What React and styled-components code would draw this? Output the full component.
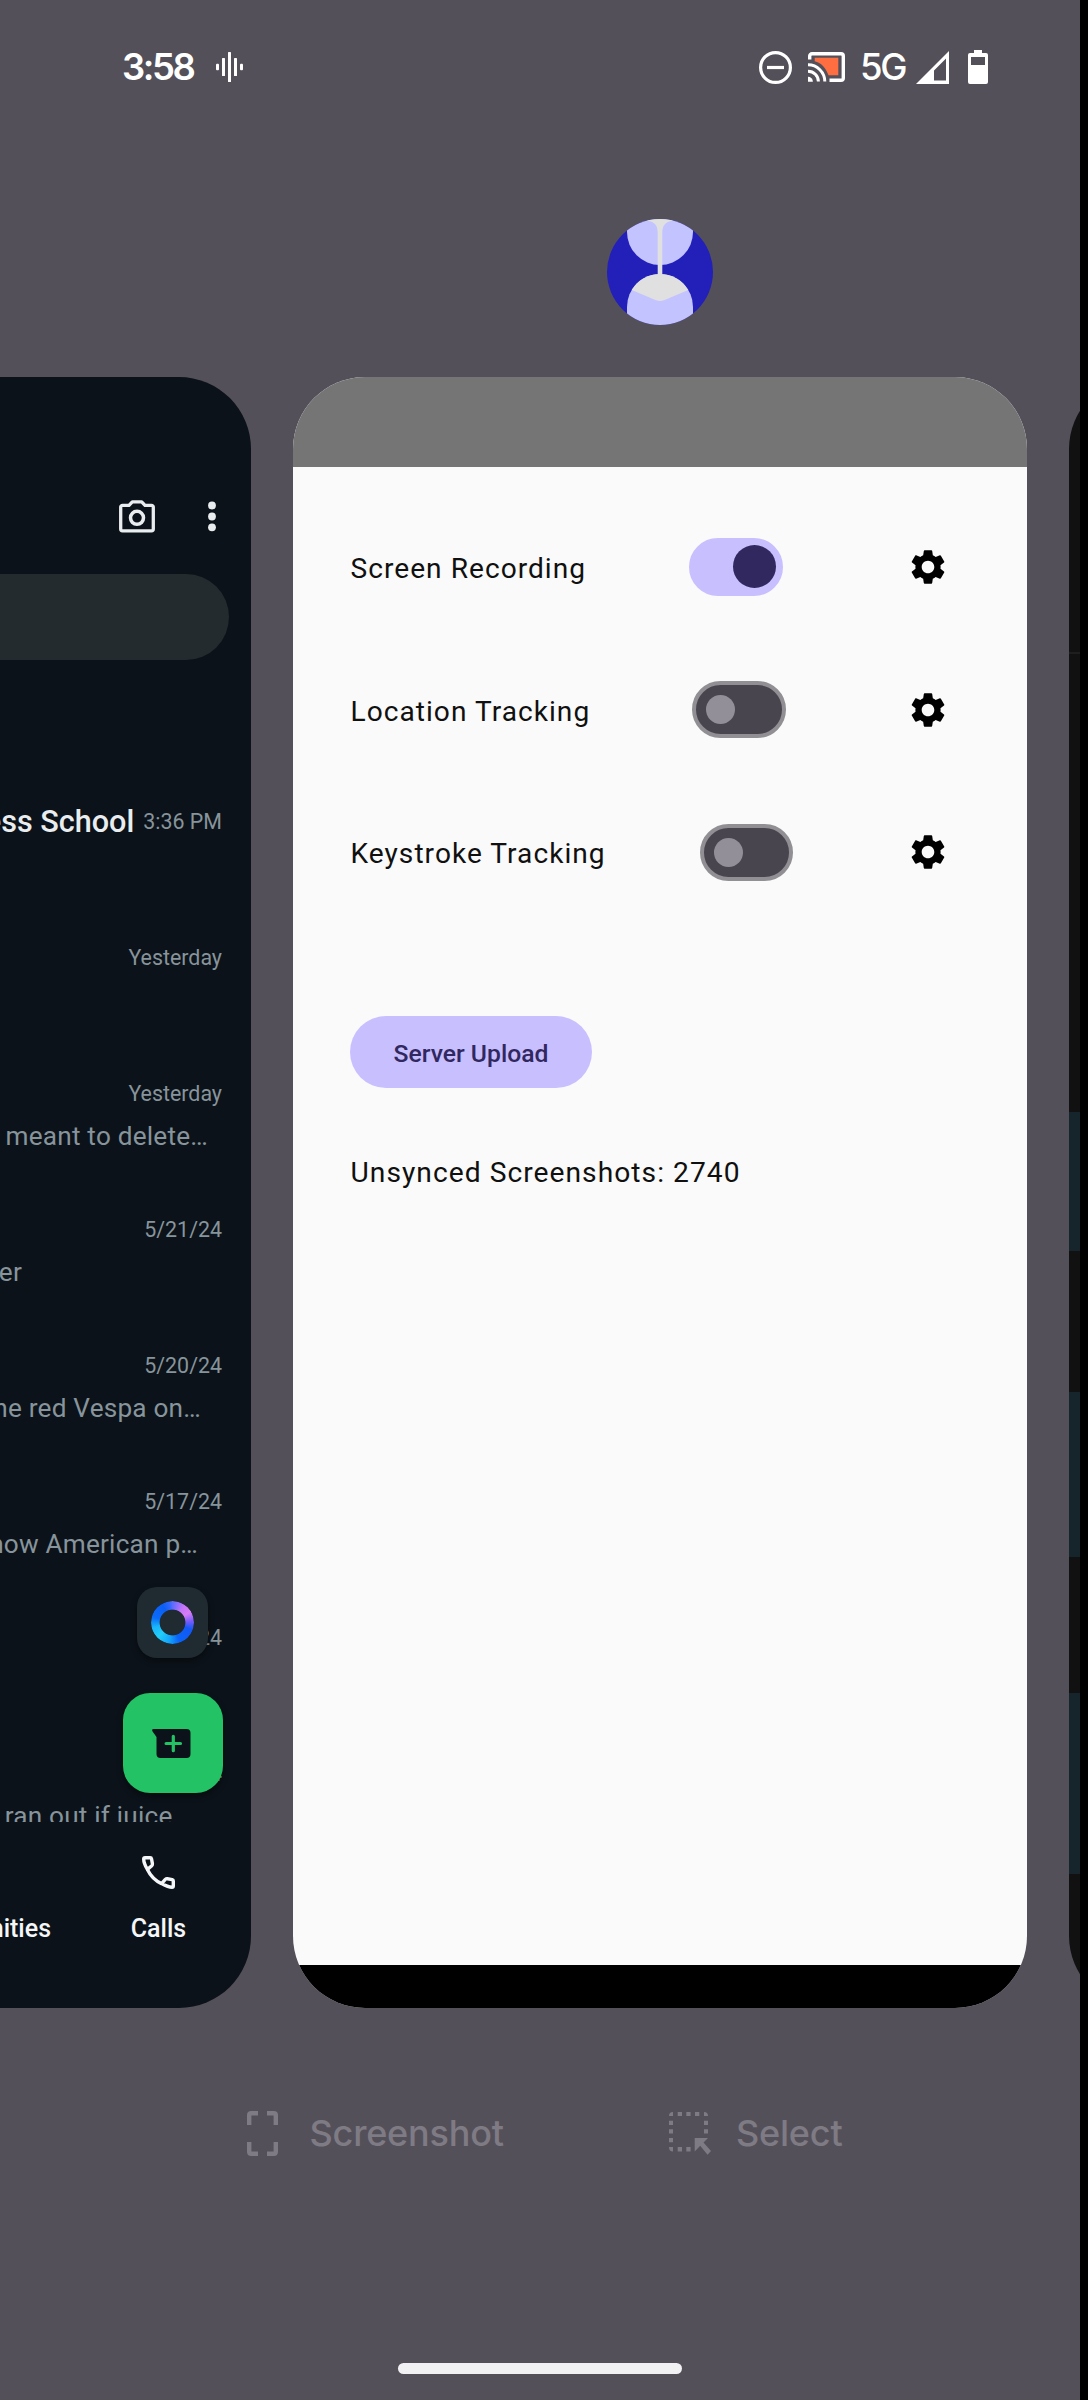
import React from "react";
import styled, { createGlobalStyle } from "styled-components";
import { MdSettings } from "react-icons/md";

const GlobalStyle = createGlobalStyle`
  * { box-sizing: border-box; }
  html, body { margin: 0; padding: 0; background: #000; }
  body { width: 1088px; height: 2400px; overflow: hidden; font-family: Roboto, "Liberation Sans", sans-serif; }
  svg { display: block; flex: none; overflow: visible; }
`;

const Screen = styled.div`
  width: 1080px;
  height: 2400px;
  background: #54505a;
  overflow: hidden;
  display: flex;
  flex-direction: column;
`;

/* ---------- status bar ---------- */
const StatusBar = styled.header`
  height: 134px;
  padding: 0 92px 0 122px;
  display: flex;
  align-items: center;
  justify-content: space-between;
  color: #fff;
`;
const StatusGroup = styled.div`
  display: flex;
  align-items: center;
`;
const Clock = styled.span`
  font: 600 36.5px/44px Inter, Roboto, sans-serif;
  letter-spacing: -2.4px;
  width: 94px;
`;
const Network = styled.span`
  font: 500 36.5px/44px Inter, Roboto, sans-serif;
  letter-spacing: -2.4px;
  width: 56px;
  margin-left: 15px;
`;
const Spacer = styled.span`
  flex: none;
  width: ${(p) => p.$w}px;
`;

/* ---------- recents ---------- */
const AppBadge = styled.div`
  height: 243px;
  padding: 85px 0 0 607px;
`;
const Carousel = styled.main`
  height: 1631px;
  display: flex;
  gap: 42px;
  overflow: hidden;
`;
const Card = styled.section`
  position: relative;
  flex: none;
  height: 100%;
  overflow: hidden;
  display: flex;
  flex-direction: column;
`;
const ChatCard = styled(Card)`
  width: 251px;
  border-radius: 0 72px 72px 0;
  background: #0b1219;
`;
const TrackerCard = styled(Card)`
  width: 734px;
  border-radius: 72px;
  background: #fafafa;
`;
const NextCard = styled(Card)`
  width: 734px;
  border-radius: 72px;
  background: #111112;
`;
const Band = styled.div`
  height: ${(p) => p.$h}px;
  background: ${(p) => p.$c || "transparent"};
`;

/* ---------- chat card ---------- */
const ChatTop = styled.div`
  height: 197px;
  padding: 123px 35px 0 0;
  display: flex;
  justify-content: flex-end;
  gap: 53px;
`;
const SearchPill = styled.div`
  width: 229px;
  height: 86px;
  border-radius: 0 43px 43px 0;
  background: #242b2f;
`;
const ChatList = styled.div`
  height: 1037px;
  margin-top: 125px;
  overflow: hidden;
`;
const ChatRow = styled.div`
  height: 136px;
  padding: 20.5px 29px 0 0;
`;
const RowHead = styled.div`
  height: 32px;
  display: flex;
  justify-content: flex-end;
  align-items: center;
  gap: 9px;
  white-space: nowrap;
`;
const ChatName = styled.span`
  font-size: 30.6px;
  line-height: 32px;
  font-weight: 500;
  color: #e9edef;
`;
const ChatDate = styled.span`
  font-size: 21.4px;
  line-height: 32px;
  color: #87949b;
`;
const Preview = styled.div`
  display: flex;
  justify-content: flex-end;
  height: 32px;
  margin: 10.5px ${(p) => p.$r}px 0 0;
  font-size: 26.2px;
  line-height: 32px;
  letter-spacing: 0.2px;
  white-space: nowrap;
  color: #87949b;
`;
const AiButton = styled.div`
  position: absolute;
  left: 137px;
  top: 1210px;
  width: 71px;
  height: 71px;
  border-radius: 20px;
  background: #202b31;
  box-shadow: 0 3px 6px rgba(0, 0, 0, 0.4);
  display: grid;
  place-items: center;
`;
const Ring = styled.div`
  width: 43px;
  height: 43px;
  border-radius: 50%;
  background: conic-gradient(#5a6cff 0deg, #c574f8 35deg, #d77cf6 60deg, #7d5cfa 85deg, #1358f5 110deg, #0a63f8 160deg, #14a5fb 190deg, #22cdf8 225deg, #19b5fa 255deg, #0a6cf8 285deg, #0b5ef5 330deg, #2f66fb 350deg, #5a6cff 360deg);
  mask: radial-gradient(circle, transparent 12.5px, #000 13.3px);
`;
const NewChat = styled.div`
  position: absolute;
  left: 123px;
  top: 1316px;
  width: 99.5px;
  height: 100px;
  border-radius: 27px;
  background: #23c265;
  box-shadow: 0 3px 6px rgba(0, 0, 0, 0.4);
  padding: 36px 0 0 29px;
`;
const TabBar = styled.nav`
  flex: 1;
  padding-top: 34px;
  display: flex;
  justify-content: space-between;
  color: #f4f6f8;
`;
const Tab = styled.div`
  width: ${(p) => p.$w}px;
  margin-right: ${(p) => p.$r || 0}px;
  display: flex;
  flex-direction: column;
  align-items: ${(p) => p.$align || "center"};
`;
const TabIcon = styled.div`
  height: 34px;
  margin-bottom: 22px;
`;
const TabLabel = styled.span`
  font-size: 25px;
  line-height: 34px;
  font-weight: 500;
`;

/* ---------- tracker card ---------- */
const AppBar = styled.div`
  height: 89.5px;
  background: #757575;
`;
const Body = styled.div`
  flex: 1;
  padding: 29px 57.5px 0;
  color: #101010;
`;
const Setting = styled.div`
  height: 142.8px;
  display: flex;
  align-items: center;
`;
const Label = styled.span`
  width: ${(p) => p.$w}px;
  padding-top: 4px;
  font-size: 28.1px;
  line-height: 40px;
  letter-spacing: 1.03px;
  white-space: nowrap;
`;
const Switch = styled.span`
  width: 93.5px;
  height: 57.5px;
  border-radius: 29px;
  border: 4px solid ${(p) => (p.$on ? "#c8bfff" : "#918f94")};
  background: ${(p) => (p.$on ? "#c8bfff" : "#48454f")};
  display: flex;
  align-items: center;
  justify-content: ${(p) => (p.$on ? "flex-end" : "flex-start")};
  padding: 0 ${(p) => (p.$on ? 3.3 : 10)}px;
`;
const Thumb = styled.span`
  width: ${(p) => (p.$on ? 43 : 29)}px;
  height: ${(p) => (p.$on ? 43 : 29)}px;
  border-radius: 50%;
  background: ${(p) => (p.$on ? "#31285f" : "#928f99")};
`;
const Gear = styled(MdSettings)`
  width: 42px;
  height: 42px;
  margin-left: auto;
  margin-right: 21px;
  color: #000;
`;
const Upload = styled.button`
  display: block;
  width: 242px;
  height: 71.5px;
  margin: 92.5px 0 0 -0.5px;
  padding: 3px 0 0;
  border: 0;
  border-radius: 36px;
  background: #c8bfff;
  color: #31285f;
  font: 500 24.7px/36px Roboto, sans-serif;
`;
const Unsynced = styled.div`
  margin-top: 65.5px;
  font-size: 28.2px;
  line-height: 40px;
  letter-spacing: 1.03px;
`;
const NavBar = styled.div`
  height: 43px;
  background: #000;
`;

/* ---------- bottom ---------- */
const Actions = styled.div`
  height: 355px;
  padding: 100px 0 0 247px;
  display: flex;
  color: #7f7b84;
`;
const Action = styled.div`
  height: 50px;
  width: ${(p) => p.$w}px;
  display: flex;
  align-items: center;
  gap: ${(p) => p.$gap}px;
  font: 500 36px/48px Inter, Roboto, sans-serif;
  letter-spacing: -0.2px;
`;
const HomeHandle = styled.div`
  width: 284px;
  height: 11px;
  margin-left: 398px;
  border-radius: 6px;
  background: #f1f0f2;
`;

const WaveIcon = () => (
  <svg width="27" height="32" viewBox="0 0 27 32" fill="#fff">
    <rect x="0" y="12.8" width="3" height="6.4" rx="1" />
    <rect x="6" y="7" width="3" height="18" rx="0.6" />
    <rect x="12" y="1" width="3" height="30" rx="0.6" />
    <rect x="18" y="7" width="3" height="18" rx="0.6" />
    <rect x="24" y="12.8" width="3" height="6.4" rx="1" />
  </svg>
);
const DndIcon = () => (
  <svg width="33" height="33" viewBox="0 0 33 33" fill="none" stroke="#fff" strokeWidth="3.2">
    <circle cx="16.5" cy="16.5" r="14.9" />
    <path d="M8 16.5h17" />
  </svg>
);
const CastIcon = () => (
  <svg width="37" height="30" viewBox="0 0 37 30" fill="none" stroke="#fff" strokeWidth="3.4">
    <path d="M6.7 5.7H30.3V23.3H20.5C18 16 13 10.500 6.700 9.200Z" fill="#ff6e40" stroke="none" />
    <path d="M1.700 7.500V4A2.300 2.300 0 0 1 4 1.700H33A2.300 2.300 0 0 1 35.300 4V26A2.300 2.300 0 0 1 33 28.300H21.500" />
    <path d="M0 12.800A16.800 16.800 0 0 1 16.800 29.600M0 19.200A10.400 10.400 0 0 1 10.400 29.600" strokeWidth="3" />
    <path d="M0 24.800A4.900 4.900 0 0 1 4.900 29.700H0Z" fill="#fff" stroke="none" />
  </svg>
);
const SignalIcon = () => (
  <svg width="33" height="33" viewBox="0 0 33 33">
    <path fillRule="evenodd" fill="#fff" d="M33 0V33H0ZM30 7.500L18 19.500V29.500H30Z" />
  </svg>
);
const BatteryIcon = () => (
  <svg width="20" height="34" viewBox="0 0 20 34">
    <path fillRule="evenodd" fill="#fff" d="M6 0H14V3H18A2 2 0 0 1 20 5V32A2 2 0 0 1 18 34H2A2 2 0 0 1 0 32V5A2 2 0 0 1 2 3H6ZM3 7V15H17V7Z" />
  </svg>
);
const HourglassIcon = () => (
  <svg width="106" height="106" viewBox="0 0 106 106">
    <clipPath id="disc"><circle cx="53" cy="53" r="53" /></clipPath>
    <g clipPath="url(#disc)">
      <rect width="106" height="106" fill="#2220b8" />
      <path d="M20 0H86V13A33 33 0 0 1 20 13Z" fill="#c3c3ff" />
      <path d="M36 0H70L65 2C59 2.500 55.300 6 55.300 14V60H50.700V14C50.700 6 47 2.500 41 2Z" fill="#e0e0e0" />
      <path d="M20 106V88A33 33 0 0 1 86 88V106Z" fill="#c3c3ff" />
      <path d="M24.700 71A33 33 0 0 1 81.300 71L57 81.300Q53 82.800 49 81.300Z" fill="#e0e0e0" />
    </g>
  </svg>
);
const CameraIcon = () => (
  <svg width="36" height="33" viewBox="0 0 36 33" fill="none" stroke="#e9edef" strokeWidth="3.300" strokeLinejoin="round">
    <path d="M3.500 5.300H10L13.300 1.800H22.700L26 5.300H32.500A1.800 1.800 0 0 1 34.300 7.100V29A1.800 1.800 0 0 1 32.500 30.800H3.500A1.800 1.800 0 0 1 1.700 29V7.100A1.800 1.800 0 0 1 3.500 5.300Z" />
    <circle cx="18" cy="17.800" r="6.500" strokeWidth="3.500" />
  </svg>
);
const DotsIcon = () => (
  <svg width="8" height="32" viewBox="0 0 8 32" fill="#e9edef">
    <circle cx="4" cy="5.500" r="3.900" />
    <circle cx="4" cy="16.500" r="3.900" />
    <circle cx="4" cy="27.300" r="3.900" />
  </svg>
);
const NewChatIcon = () => (
  <svg width="39" height="29" viewBox="0 0 39 29">
    <path d="M1.500 0H34.500A4 4 0 0 1 38.500 4V25A4 4 0 0 1 34.500 29H8.500A4 4 0 0 1 4.500 25V8L.4 2.200Q-.5 0 1.500 0Z" fill="#0b1219" />
    <path d="M21.300 7.300V21.700M14.100 14.500H28.500" stroke="#23c265" strokeWidth="3.200" strokeLinecap="round" />
  </svg>
);
const PhoneIcon = () => (
  <svg width="33" height="33" viewBox="0 0 33 33" fill="none" stroke="#f4f6f8" strokeWidth="3.400" strokeLinejoin="round">
    <path d="M3 1.700H8.200Q9.300 1.700 9.500 2.800L10.400 7.600Q10.600 8.800 9.800 9.700L5.400 13.400C3 9.500 1.700 6 1.700 3Q1.700 1.700 3 1.700Z" />
    <path d="M5.400 13.400C8.500 19.800 13.200 24.600 19.600 27.600" />
    <path d="M19.600 27.600L23.300 23.400Q24.200 22.500 25.400 22.700L30.200 23.600Q31.300 23.900 31.300 25V30Q31.300 31.300 30 31.300C27 31.300 23.500 29.800 19.600 27.600Z" />
  </svg>
);
const FrameIcon = () => (
  <svg width="31" height="45" viewBox="0 0 31 45" fill="none" stroke="#7f7b84" strokeWidth="4.400">
    <path d="M2.200 14V4.200Q2.200 2.200 4.200 2.200H11M20 2.200H26.800Q28.800 2.200 28.800 4.200V14M2.200 31V40.800Q2.200 42.800 4.200 42.800H11M20 42.800H26.800Q28.800 42.800 28.800 40.800V31" />
  </svg>
);
const SelectIcon = () => (
  <svg width="42" height="43" viewBox="0 0 42 43" fill="#7f7b84">
    <path d="M4 0V4H0Q0 0 4 0ZM8.700 0h4.300v4h-4.300ZM17.300 0h4.300v4h-4.300ZM26 0h4.300v4H26ZM35 0Q39 0 39 4H35ZM0 8.700h4v4.300H0ZM0 17.300h4v4.300H0ZM0 26h4v4.300H0ZM35 8.700h4v4.300h-4ZM35 17.300h4v4.300h-4ZM0 35H4V39.500Q0 39.500 0 35ZM8.700 35h4.300v4.500H8.700ZM17.300 35h4.300v4.500h-4.300Z" />
    <path d="M25.700 26H39L34.500 30.500L42 39L38.500 42.700L31.200 33.800L25.700 39.500Z" />
  </svg>
);

const chats = [
  { name: "ess School", date: "3:36 PM" },
  { date: "Yesterday" },
  { date: "Yesterday", text: "meant to delete…", r: 14 },
  { date: "5/21/24", text: "er", r: 200 },
  { date: "5/20/24", text: "he red Vespa on…", r: 21 },
  { date: "5/17/24", text: "how American p…", r: 24 },
  { date: "5/14/24" },
  { date: "5/14/24", text: "ran out if juice", r: 49.5 },
];
const settings = [
  { label: "Screen Recording", w: 338.8, on: true },
  { label: "Location Tracking", w: 341.8 },
  { label: "Keystroke Tracking", w: 349.2 },
];

export default function App() {
  return (
    <>
      <GlobalStyle />
      <Screen>
        <StatusBar>
          <StatusGroup>
            <Clock>3:58</Clock>
            <WaveIcon />
          </StatusGroup>
          <StatusGroup>
            <DndIcon />
            <Spacer $w={16} />
            <CastIcon />
            <Network>5G</Network>
            <SignalIcon />
            <Spacer $w={19} />
            <BatteryIcon />
          </StatusGroup>
        </StatusBar>
        <AppBadge>
          <HourglassIcon />
        </AppBadge>
        <Carousel>
          <ChatCard>
            <ChatTop>
              <CameraIcon />
              <DotsIcon />
            </ChatTop>
            <SearchPill />
            <ChatList>
              {chats.map((c, i) => (
                <ChatRow key={i}>
                  <RowHead>
                    {c.name && <ChatName>{c.name}</ChatName>}
                    <ChatDate>{c.date}</ChatDate>
                  </RowHead>
                  {c.text && <Preview $r={c.r}>{c.text}</Preview>}
                </ChatRow>
              ))}
            </ChatList>
            <TabBar>
              <Tab $w={51} $align="flex-end">
                <TabIcon />
                <TabLabel>nities</TabLabel>
              </Tab>
              <Tab $w={60} $r={62.5}>
                <TabIcon><PhoneIcon /></TabIcon>
                <TabLabel>Calls</TabLabel>
              </Tab>
            </TabBar>
            <AiButton><Ring /></AiButton>
            <NewChat><NewChatIcon /></NewChat>
          </ChatCard>
          <TrackerCard>
            <AppBar />
            <Body>
              {settings.map((s) => (
                <Setting key={s.label}>
                  <Label $w={s.w}>{s.label}</Label>
                  <Switch $on={s.on}><Thumb $on={s.on} /></Switch>
                  <Gear />
                </Setting>
              ))}
              <Upload>Server Upload</Upload>
              <Unsynced>Unsynced Screenshots: 2740</Unsynced>
            </Body>
            <NavBar />
          </TrackerCard>
          <NextCard>
            <Band $h={275} />
            <Band $h={2} $c="#1e1e1f" />
            <Band $h={458} />
            <Band $h={139} $c="#16242b" />
            <Band $h={141} />
            <Band $h={165} $c="#16242b" />
            <Band $h={136} />
            <Band $h={181} $c="#16242b" />
          </NextCard>
        </Carousel>
        <Actions>
          <Action $w={422} $gap={31.5}><FrameIcon />Screenshot</Action>
          <Action $w={220} $gap={25}><SelectIcon />Select</Action>
        </Actions>
        <HomeHandle />
      </Screen>
    </>
  );
}
